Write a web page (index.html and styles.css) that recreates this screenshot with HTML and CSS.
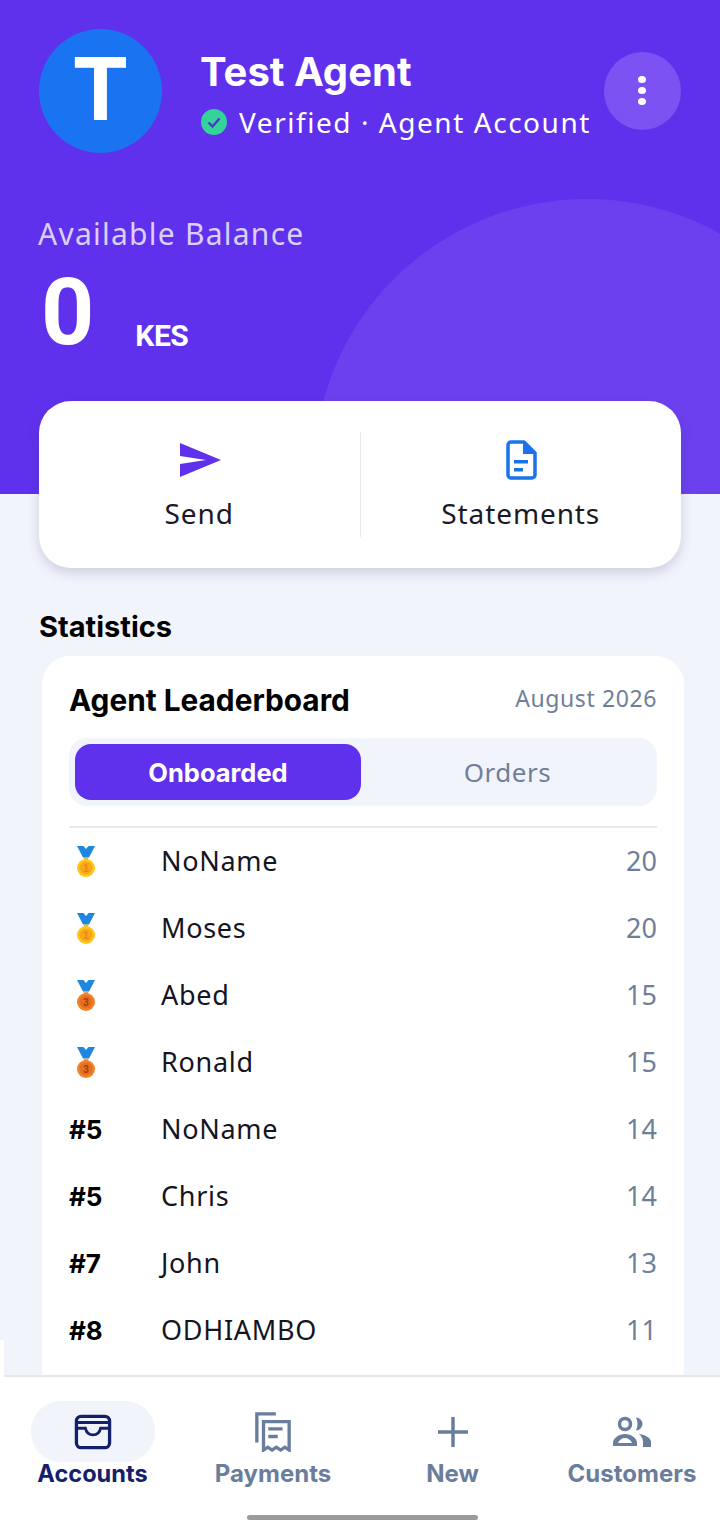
FILE: index.html
```html
<!DOCTYPE html>
<html lang="en">
<head>
    <meta charset="UTF-8">
    <meta name="viewport" content="width=device-width, initial-scale=1.0">
    <title>Agent Account</title>
    <link rel="stylesheet" href="styles.css">
</head>
<body>
    <div class="app">
        <div class="content">
            <section class="hero">
                <div class="hero-circle"></div>
                <div class="profile">
                    <div class="avatar">T</div>
                    <div class="profile-text">
                        <div class="profile-name">Test Agent</div>
                        <div class="profile-status">
                            <svg class="status-icon" viewBox="0 0 26 26">
                                <circle cx="13" cy="13" r="13" fill="#34d399"/>
                                <path d="M7.500 13.500l4 4 7-8" fill="none" stroke="#4f35c9" stroke-width="2.400"/>
                            </svg>
                            <span>Verified · Agent Account</span>
                        </div>
                    </div>
                    <button class="more-btn">
                        <span class="dot"></span>
                        <span class="dot"></span>
                        <span class="dot"></span>
                    </button>
                </div>
                <div class="balance-label">Available Balance</div>
                <div class="balance">
                    <span class="balance-value">0</span>
                    <span class="balance-currency">KES</span>
                </div>
            </section>

            <section class="actions">
                <div class="action">
                    <svg class="action-icon action-icon-send" viewBox="0 0 42 36">
                        <path d="M1 1l41 17L1 35V22l26-4L1 14z" fill="#5f31ec"/>
                    </svg>
                    <span>Send</span>
                </div>
                <div class="action-divider"></div>
                <div class="action">
                    <svg class="action-icon" viewBox="0 0 32 40">
                        <path d="M6 2h13l11 11v22a3 3 0 0 1-3 3H6a3 3 0 0 1-3-3V5a3 3 0 0 1 3-3z" fill="none" stroke="#1a73e8" stroke-width="3.500" stroke-linejoin="round"/>
                        <path d="M18 2l12 12H18z" fill="#1a73e8"/>
                        <path d="M9 20h14v3.500H9zM9 28h9v3.500H9z" fill="#1a73e8"/>
                    </svg>
                    <span>Statements</span>
                </div>
            </section>

            <h2 class="section-title">Statistics</h2>

            <section class="board">
                <div class="board-head">
                    <h3>Agent Leaderboard</h3>
                    <span class="board-date">August 2026</span>
                </div>
                <div class="tabs">
                    <div class="tab tab-active">Onboarded</div>
                    <div class="tab">Orders</div>
                </div>
                <div class="rows">
                    <div class="row">
                        <div class="rank">
                            <svg class="medal" viewBox="0 0 18 31">
                                <path d="M0 0h6.500L9 3l2.500-3H18l-6 11.500H6z" fill="#1e88e0"/>
                                <path d="M6.500 11.500h5L11 14H7z" fill="#d8b45c"/>
                                <circle cx="9" cy="22" r="9" fill="#ffc61a"/>
                                <circle cx="9" cy="22" r="6.500" fill="#f9a61a"/>
                                <text class="medal-num gold-num" x="9" y="25.500">1</text>
                            </svg>
                        </div>
                        <div class="name">NoName</div>
                        <div class="score">20</div>
                    </div>
                    <div class="row">
                        <div class="rank">
                            <svg class="medal" viewBox="0 0 18 31">
                                <path d="M0 0h6.500L9 3l2.500-3H18l-6 11.500H6z" fill="#1e88e0"/>
                                <path d="M6.500 11.500h5L11 14H7z" fill="#d8b45c"/>
                                <circle cx="9" cy="22" r="9" fill="#ffc61a"/>
                                <circle cx="9" cy="22" r="6.500" fill="#f9a61a"/>
                                <text class="medal-num gold-num" x="9" y="25.500">1</text>
                            </svg>
                        </div>
                        <div class="name">Moses</div>
                        <div class="score">20</div>
                    </div>
                    <div class="row">
                        <div class="rank">
                            <svg class="medal" viewBox="0 0 18 31">
                                <path d="M0 0h6.500L9 3l2.500-3H18l-6 11.500H6z" fill="#1e88e0"/>
                                <path d="M6.500 11.500h5L11 14H7z" fill="#d8a27c"/>
                                <circle cx="9" cy="22" r="9" fill="#f0822a"/>
                                <circle cx="9" cy="22" r="6.500" fill="#e56f1f"/>
                                <text class="medal-num bronze-num" x="9" y="25.500">3</text>
                            </svg>
                        </div>
                        <div class="name">Abed</div>
                        <div class="score">15</div>
                    </div>
                    <div class="row">
                        <div class="rank">
                            <svg class="medal" viewBox="0 0 18 31">
                                <path d="M0 0h6.500L9 3l2.500-3H18l-6 11.500H6z" fill="#1e88e0"/>
                                <path d="M6.500 11.500h5L11 14H7z" fill="#d8a27c"/>
                                <circle cx="9" cy="22" r="9" fill="#f0822a"/>
                                <circle cx="9" cy="22" r="6.500" fill="#e56f1f"/>
                                <text class="medal-num bronze-num" x="9" y="25.500">3</text>
                            </svg>
                        </div>
                        <div class="name">Ronald</div>
                        <div class="score">15</div>
                    </div>
                    <div class="row">
                        <div class="rank">#5</div>
                        <div class="name">NoName</div>
                        <div class="score">14</div>
                    </div>
                    <div class="row">
                        <div class="rank">#5</div>
                        <div class="name">Chris</div>
                        <div class="score">14</div>
                    </div>
                    <div class="row">
                        <div class="rank">#7</div>
                        <div class="name">John</div>
                        <div class="score">13</div>
                    </div>
                    <div class="row">
                        <div class="rank">#8</div>
                        <div class="name">ODHIAMBO</div>
                        <div class="score">11</div>
                    </div>
                </div>
            </section>
        </div>

        <nav class="nav">
            <div class="nav-item nav-item-active">
                <div class="nav-icon">
                    <svg viewBox="0 0 40 38" width="38" height="36">
                        <rect x="2.500" y="2.500" width="35" height="33" rx="5" fill="none" stroke="currentColor" stroke-width="3.500"/>
                        <path d="M3 9h34" stroke="currentColor" stroke-width="3"/>
                        <path d="M3 15h9c1 5 4 7 8 7s7-2 8-7h9" fill="none" stroke="currentColor" stroke-width="3"/>
                    </svg>
                </div>
                <span>Accounts</span>
            </div>
            <div class="nav-item">
                <div class="nav-icon">
                    <svg viewBox="0 0 40 42" width="38" height="40">
                        <path d="M23 2H3v30" fill="none" stroke="currentColor" stroke-width="3.500"/>
                        <path d="M10 10h27v30l-4.500-3-4.500 3-4.500-3-4.500 3-4.500-3-4.500 3z" fill="none" stroke="currentColor" stroke-width="3.500"/>
                        <path d="M15 16h15v3.500H15zM15 24h10v3.500H15z" fill="currentColor"/>
                    </svg>
                </div>
                <span>Payments</span>
            </div>
            <div class="nav-item">
                <div class="nav-icon">
                    <svg viewBox="0 0 32 32" width="32" height="32">
                        <path d="M16 1v30M1 16h30" stroke="currentColor" stroke-width="3.500"/>
                    </svg>
                </div>
                <span>New</span>
            </div>
            <div class="nav-item">
                <div class="nav-icon">
                    <svg viewBox="0 0 40 32" width="40" height="32">
                        <circle cx="13" cy="8" r="5.500" fill="none" stroke="currentColor" stroke-width="3.500"/>
                        <path d="M24 1.500a6.500 6.500 0 0 1 0 13c2-4 2-9 0-13z" fill="currentColor"/>
                        <path d="M1 30v-3c0-5 6-9 12-9s12 4 12 9v3z" fill="currentColor"/>
                        <path d="M6 27c1-3 4-5 7-5s6 2 7 5z" fill="#fff"/>
                        <path d="M27 18c7 1 12 4 12 8v5h-8v-5c0-3-1.500-6-4-8z" fill="currentColor"/>
                    </svg>
                </div>
                <span>Customers</span>
            </div>
            <div class="home-bar"></div>
        </nav>
    </div>
</body>
</html>
```

FILE: styles.css
```css
* {
    box-sizing: border-box;
}
html, body {
    margin: 0;
    padding: 0;
    height: 100%;
}
body {
    font-family: "Noto Sans", "Open Sans", sans-serif;
    background-color: #fff;
    color: #111;
}
.app {
    position: relative;
    height: 1526px;
    display: flex;
    flex-direction: column;
    overflow: hidden;
    background-color: #f2f4fc;
}
/* white sliver down the left edge beside the nav */
.app::after {
    content: "";
    position: absolute;
    left: 0;
    top: 1340px;
    width: 4px;
    height: 186px;
    background-color: #fff;
}
.content {
    flex: 1;
    min-height: 0;
    overflow: hidden;
}

/* Purple header */
.hero {
    position: relative;
    height: 494px;
    padding: 29px 39px 0;
    background-color: #5f31ec;
    overflow: hidden;
    color: #fff;
}
.hero-circle {
    position: absolute;
    left: 314px;
    top: 199px;
    width: 546px;
    height: 546px;
    border-radius: 50%;
    background-color: #6c40ef;
}
.profile {
    position: relative;
    display: flex;
    align-items: center;
}
.avatar {
    width: 123px;
    height: 124px;
    flex: none;
    border-radius: 50%;
    background-color: #1a73f0;
    display: flex;
    align-items: center;
    justify-content: center;
    padding-bottom: 4px;
    font-family: "Inter", sans-serif;
    font-size: 86px;
    font-weight: 700;
}
.profile-text {
    margin-left: 39px;
    flex: 1;
    margin-top: 8px;
}
.profile-name {
    margin-left: -1px;
    font-family: "Inter", sans-serif;
    font-size: 40px;
    font-weight: 700;
    line-height: 46px;
}
.profile-status {
    display: flex;
    align-items: center;
    gap: 12px;
    margin-top: 8px;
    font-size: 28px;
    letter-spacing: 1.55px;
    line-height: 38px;
}
.status-icon {
    width: 26px;
    height: 26px;
    flex: none;
}
.more-btn {
    width: 77px;
    height: 78px;
    flex: none;
    margin-top: -1px;
    border: none;
    border-radius: 50%;
    background-color: #7c53f2;
    display: flex;
    flex-direction: column;
    align-items: center;
    justify-content: center;
    gap: 4px;
    padding: 0 2px 0 0;
}
.dot {
    width: 8px;
    height: 7px;
    border-radius: 50%;
    background-color: #fff;
}
.balance-label {
    position: relative;
    margin-top: 61px;
    margin-left: -1px;
    font-size: 30px;
    letter-spacing: 1.25px;
    line-height: 40px;
    color: #dccffb;
}
.balance {
    position: relative;
    display: flex;
    align-items: flex-end;
    margin-top: 9px;
}
.balance-value {
    font-family: "Roboto", sans-serif;
    font-size: 93px;
    font-weight: 700;
    line-height: 100px;
    margin-left: 2px;
}
.balance-currency {
    font-family: "Roboto", sans-serif;
    font-size: 30px;
    font-weight: 700;
    letter-spacing: -0.5px;
    margin-left: 41px;
    margin-bottom: 10px;
}

/* Send / Statements card */
.actions {
    position: relative;
    height: 167px;
    margin: -93px 39px 0;
    background-color: #fff;
    border-radius: 32px;
    box-shadow: 0 5px 12px rgba(60, 60, 110, 0.2);
    display: flex;
    align-items: center;
}
.action {
    flex: 1;
    height: 100%;
    display: flex;
    flex-direction: column;
    align-items: center;
    padding-top: 39px;
    font-size: 28px;
    letter-spacing: 0.9px;
    color: #1a1a26;
}
.action span {
    margin-top: 14px;
    line-height: 38px;
}
.action-icon {
    height: 40px;
    width: 42px;
}
.action-icon-send {
    margin-left: 2px;
}
.action-divider {
    width: 1px;
    height: 105px;
    background-color: #e8e9f0;
}

.section-title {
    font-family: "Inter", sans-serif;
    font-size: 29px;
    font-weight: 700;
    color: #000;
    margin: 41px 39px 0;
    line-height: 36px;
}

/* Leaderboard */
.board {
    margin: 11px 36px 0 42px;
    padding: 24px 27px 0;
    background-color: #fff;
    border-radius: 28px;
    height: 740px;
}
.board-head {
    display: flex;
    justify-content: space-between;
    align-items: center;
}
.board-head h3 {
    margin: 0;
    font-family: "Inter", sans-serif;
    font-size: 29.8px;
    font-weight: 700;
    line-height: 40px;
    color: #000;
}
.board-date {
    font-size: 23px;
    letter-spacing: 0.6px;
    line-height: 30px;
    margin-top: -4px;
    color: #6f7f99;
}
.tabs {
    display: flex;
    margin-top: 18px;
    padding: 6px;
    height: 68px;
    background-color: #f2f4fc;
    border-radius: 18px;
}
.tab {
    flex: 1;
    display: flex;
    align-items: center;
    justify-content: center;
    padding-left: 3px;
    font-size: 26px;
    letter-spacing: 0.5px;
    color: #6f7f99;
    border-radius: 16px;
}
.tab-active {
    flex: 0 0 286px;
    padding-left: 0;
    background-color: #5f31ec;
    color: #fff;
    font-family: "Inter", sans-serif;
    font-size: 25.5px;
    font-weight: 700;
    letter-spacing: 0;
}
.rows {
    margin-top: 20px;
    border-top: 2px solid #e6e8f0;
}
.row {
    display: flex;
    align-items: center;
    height: 67px;
    padding-bottom: 2px;
}
.rank {
    width: 92px;
    flex: none;
    padding-top: 2px;
    font-family: "Inter", sans-serif;
    font-size: 26px;
    font-weight: 700;
    color: #000;
    display: flex;
    align-items: center;
}
.medal {
    width: 18px;
    height: 31px;
    margin-left: 8px;
}
.medal-num {
    font-family: "Liberation Sans", sans-serif;
    font-size: 10px;
    font-weight: 700;
    text-anchor: middle;
}
.gold-num {
    fill: #e8890c;
}
.bronze-num {
    fill: #a33c0c;
}
.name {
    flex: 1;
    font-size: 27px;
    letter-spacing: 0.7px;
    color: #15151f;
}
.score {
    font-size: 27px;
    color: #6f7f99;
}

/* Bottom nav */
.nav {
    position: relative;
    height: 151px;
    flex: none;
    background-color: #fff;
    border-top: 2px solid #e6e7ea;
    margin-left: 4px;
    display: flex;
    padding-top: 24px;
}
.nav-item {
    display: flex;
    flex-direction: column;
    align-items: center;
    flex: none;
    width: 180px;
    margin-left: -0.5px;
    font-family: "Inter", sans-serif;
    font-size: 24px;
    font-weight: 700;
    color: #6b7d9c;
}
.nav-item span {
    line-height: 28px;
    margin-top: -2px;
}
.nav-icon {
    width: 124px;
    height: 61px;
    border-radius: 30px;
    display: flex;
    align-items: center;
    justify-content: center;
}
.nav-item-active {
    margin-left: -1.5px;
    margin-right: 1px;
    font-size: 23.6px;
    color: #14206b;
}
.nav-item-active .nav-icon {
    background-color: #f2f4fc;
}
.home-bar {
    position: absolute;
    left: 243px;
    bottom: 6px;
    width: 231px;
    height: 5px;
    border-radius: 3px;
    background-color: #9b9b9b;
}
```
